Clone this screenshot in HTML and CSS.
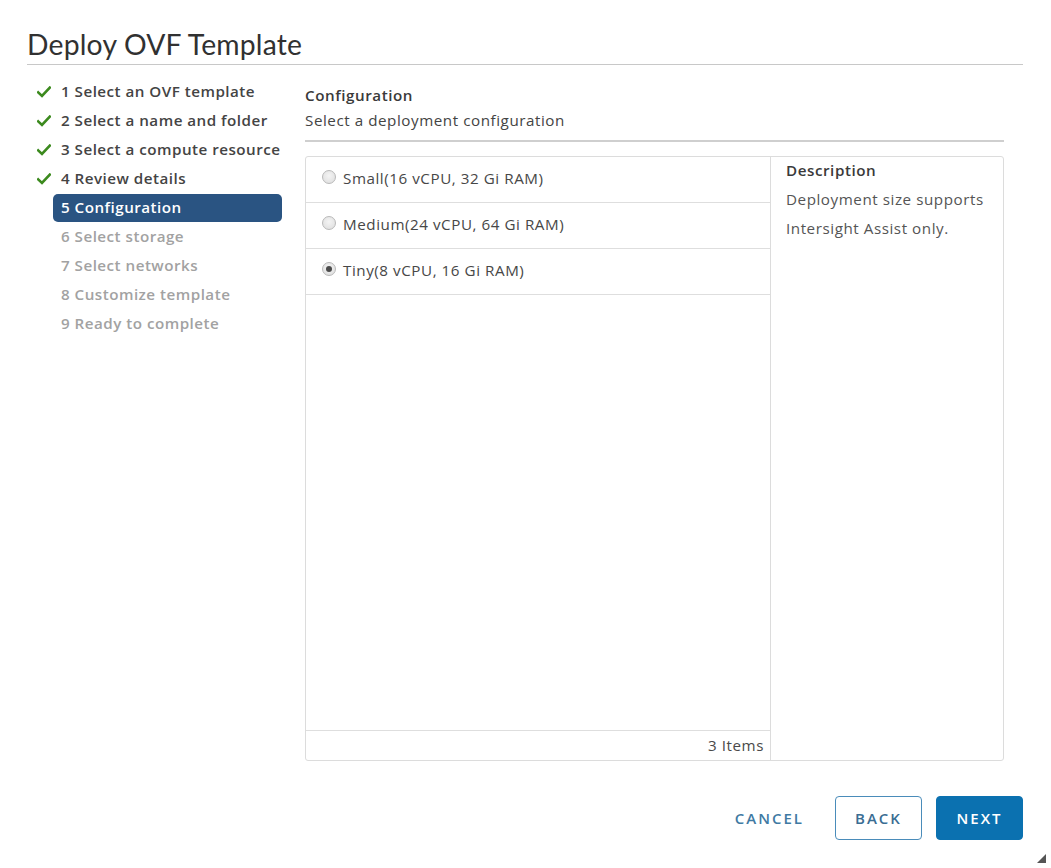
FILE: index.html
```html
<!DOCTYPE html>
<html>
<head>
<meta charset="utf-8">
<link rel="stylesheet" href="styles.css">
</head>
<body>
<div class="dialog">
  <header class="header">
    <h1 class="title">Deploy OVF Template</h1>
  </header>
  <div class="body">
    <nav class="steps">
      <div class="step done"><span class="check"><svg width="14" height="12" viewBox="0 0 14 12"><path d="M1.2 6.4 L5 10 L12.8 1.6" fill="none" stroke="#3c8a1e" stroke-width="2.6" stroke-linecap="square"/></svg></span><span class="label">1 Select an OVF template</span></div>
      <div class="step done"><span class="check"><svg width="14" height="12" viewBox="0 0 14 12"><path d="M1.2 6.4 L5 10 L12.8 1.6" fill="none" stroke="#3c8a1e" stroke-width="2.6" stroke-linecap="square"/></svg></span><span class="label">2 Select a name and folder</span></div>
      <div class="step done"><span class="check"><svg width="14" height="12" viewBox="0 0 14 12"><path d="M1.2 6.4 L5 10 L12.8 1.6" fill="none" stroke="#3c8a1e" stroke-width="2.6" stroke-linecap="square"/></svg></span><span class="label">3 Select a compute resource</span></div>
      <div class="step done"><span class="check"><svg width="14" height="12" viewBox="0 0 14 12"><path d="M1.2 6.4 L5 10 L12.8 1.6" fill="none" stroke="#3c8a1e" stroke-width="2.6" stroke-linecap="square"/></svg></span><span class="label">4 Review details</span></div>
      <div class="step active"><span class="check"></span><span class="label">5 Configuration</span></div>
      <div class="step todo"><span class="check"></span><span class="label">6 Select storage</span></div>
      <div class="step todo"><span class="check"></span><span class="label">7 Select networks</span></div>
      <div class="step todo"><span class="check"></span><span class="label">8 Customize template</span></div>
      <div class="step todo"><span class="check"></span><span class="label">9 Ready to complete</span></div>
    </nav>
    <main class="main">
      <div class="main-head">
        <div class="main-title">Configuration</div>
        <div class="main-sub">Select a deployment configuration</div>
      </div>
      <div class="panel">
        <div class="list">
          <div class="rows">
            <label class="row"><span class="radio"></span><span>Small(16 vCPU, 32 Gi RAM)</span></label>
            <label class="row"><span class="radio"></span><span>Medium(24 vCPU, 64 Gi RAM)</span></label>
            <label class="row"><span class="radio checked"></span><span>Tiny(8 vCPU, 16 Gi RAM)</span></label>
          </div>
          <div class="list-foot">3 Items</div>
        </div>
        <div class="desc">
          <div class="desc-title">Description</div>
          <div class="desc-text">Deployment size supports Intersight Assist only.</div>
        </div>
      </div>
    </main>
  </div>
  <footer class="footer">
    <button class="btn btn-link">CANCEL</button>
    <button class="btn btn-outline">BACK</button>
    <button class="btn btn-primary">NEXT</button>
  </footer>
  <span class="resize"></span>
</div>
</body>
</html>
```
FILE: styles.css
```css
* { box-sizing: border-box; }
html, body { margin: 0; padding: 0; background: #fff; }
body {
  font-family: "Open Sans", Lato, "Liberation Sans", sans-serif;
  color: #333;
  width: 1051px;
  height: 868px;
  overflow: hidden;
}
.dialog {
  position: relative;
  height: 868px;
  padding: 0 28px 0 27px;
  display: flex;
  flex-direction: column;
}
.header {
  padding-top: 24px;
  border-bottom: 1px solid #c8c8c8;
}
.title {
  margin: 0;
  font-family: Lato, "Open Sans", sans-serif;
  font-size: 28.3px;
  font-weight: 400;
  line-height: 40px;
  color: #313131;
  letter-spacing: 0.2px;
}
.body {
  display: flex;
  height: 695px;
}
.steps {
  width: 278px;
  padding-top: 12px;
  flex: none;
}
.step {
  display: flex;
  align-items: center;
  height: 29px;
}
.check {
  width: 26px;
  padding-left: 10px;
  display: flex;
  align-items: center;
}
.label {
  width: 229px;
  height: 28px;
  line-height: 27px;
  padding-left: 8px;
  font-size: 15.2px;
  font-weight: 600;
  letter-spacing: 0.48px;
  color: #444;
  border-radius: 5px;
  white-space: nowrap;
}
.step.active .label {
  background: #2a5482;
  color: #fff;
}
.step.todo .label { color: #a2a2a2; }
.main {
  flex: 1;
  padding-right: 19px;
  letter-spacing: 0.55px;
}
.main-head {
  padding-top: 18px;
  padding-bottom: 7px;
  border-bottom: 2px solid #cfcfcf;
}
.main-title {
  font-size: 15.2px;
  font-weight: 600;
  line-height: 24px;
  color: #3a3a3a;
}
.main-sub {
  font-size: 15.2px;
  line-height: 26px;
  color: #444;
}
.panel {
  margin-top: 14px;
  height: 605px;
  border: 1px solid #dcdcdc;
  border-radius: 3px;
  display: flex;
}
.list {
  width: 465px;
  display: flex;
  flex-direction: column;
  border-right: 1px solid #dcdcdc;
}
.rows { flex: 1; }
.row {
  display: flex;
  align-items: center;
  height: 46px;
  border-bottom: 1px solid #dedede;
  padding-left: 16px;
  padding-bottom: 4px;
  font-size: 15.2px;
  color: #474747;
  gap: 7px;
}
.radio {
  width: 14px;
  height: 14px;
  border-radius: 50%;
  border: 1px solid #b9b9b9;
  background: radial-gradient(circle at 50% 40%, #f4f4f4 0%, #dcdcdc 100%);
  margin-top: -2px;
  position: relative;
}
.radio.checked::after {
  content: "";
  position: absolute;
  left: 3px;
  top: 3px;
  width: 6px;
  height: 6px;
  border-radius: 50%;
  background: #4a4a4a;
}
.list-foot {
  height: 30px;
  border-top: 1px solid #dedede;
  text-align: right;
  padding-right: 6px;
  line-height: 29px;
  font-size: 15.2px;
  color: #4a4a4a;
}
.desc {
  flex: 1;
  padding: 1px 8px 0 15px;
}
.desc-title {
  font-size: 15.2px;
  font-weight: 600;
  line-height: 25px;
  color: #3a3a3a;
}
.desc-text {
  font-size: 15.2px;
  line-height: 29px;
  color: #555;
  margin-top: 2px;
}
.footer {
  display: flex;
  justify-content: flex-end;
  align-items: center;
  gap: 15px;
  padding-top: 36px;
}
.btn {
  height: 44px;
  width: 87px;
  padding: 0;
  font-family: "Open Sans", Lato, sans-serif;
  font-size: 15px;
  font-weight: 600;
  letter-spacing: 2px;
  border-radius: 4px;
  cursor: pointer;
}
.btn-link {
  width: auto;
  padding: 0 16px;
  background: none;
  border: 1px solid transparent;
  color: #3f7aa3;
  margin-right: -1px;
}
.btn-outline {
  background: #fff;
  border: 1px solid #4a8cba;
  color: #3a6d93;
  margin-right: -1px;
}
.btn-primary {
  background: #0b71b0;
  border: 1px solid #0b71b0;
  color: #fff;
}
.resize {
  position: absolute;
  right: 5px;
  bottom: 5px;
  width: 0;
  height: 0;
  border-left: 9px solid transparent;
  border-bottom: 9px solid #555;
}
```
